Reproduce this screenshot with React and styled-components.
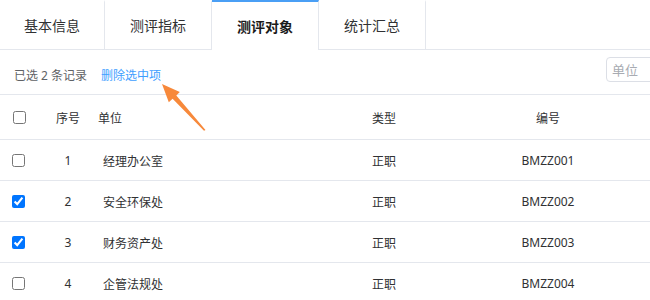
import React from "react";
import styled, { createGlobalStyle } from "styled-components";

const Global = createGlobalStyle`
  html, body { margin: 0; padding: 0; background: #fff; }
  body {
    font-family: "Noto Sans", "Noto Sans CJK SC", sans-serif;
    color: #303133;
    overflow: hidden;
  }
`;

const Page = styled.div`
  position: relative;
  width: 650px;
  height: 300px;
  overflow: hidden;
`;

const TabBar = styled.div`
  display: flex;
  border-bottom: 1px solid #e4e7ed;
  height: 49px;
`;

const Tab = styled.div`
  box-sizing: border-box;
  width: ${(p) => p.$w}px;
  height: ${(p) => (p.$active ? 50 : 49)}px;
  border-right: 1px solid #e4e7ed;
  border-top: 2px solid ${(p) => (p.$active ? "#4a9ff5" : "transparent")};
  background: #fff;
  display: flex;
  align-items: center;
  justify-content: center;
  font-size: 14px;
  font-weight: ${(p) => (p.$active ? 700 : 400)};
  color: ${(p) => (p.$active ? "#1a1a1a" : "#303133")};
  padding-bottom: ${(p) => (p.$active ? 0 : 1)}px;
  z-index: 1;
  flex: none;
`;

const Toolbar = styled.div`
  display: flex;
  align-items: center;
  height: 44px;
  padding: 0 0 0 14px;
  border-bottom: 1px solid #e4e7ed;
  font-size: 12px;
`;

const Info = styled.div`
  display: flex;
  gap: 14px;
  padding-top: 6px;
  color: #606266;
`;

const LinkText = styled.span`
  color: #409eff;
  cursor: pointer;
`;

const Search = styled.input`
  margin-left: auto;
  margin-bottom: 5px;
  width: 80px;
  height: 25px;
  box-sizing: border-box;
  border: 1px solid #dcdfe6;
  border-radius: 4px;
  padding: 0 0 0 5px;
  font-size: 13px;
  font-family: inherit;
  margin-right: -36px;
  outline: none;
  &::placeholder { color: #a8abb2; }
`;

const Row = styled.div`
  display: grid;
  grid-template-columns: 38px 60px 242px 88px 240px;
  width: 668px;
  height: ${(p) => (p.$head ? 44 : 40)}px;
  border-bottom: 1px solid #e4e7ed;
  align-items: center;
  font-size: 12px;
  color: #303133;
`;

const CheckCell = styled.div`
  padding-left: ${(p) => (p.$head ? 13 : 12)}px;
  display: flex;
  align-items: center;
  padding-top: ${(p) => (p.$head ? 0 : 0)}px;
`;

const Check = styled.input`
  margin: 0;
  width: 13px;
  height: 13px;
  accent-color: #0075ff;
`;

const Cell = styled.div`
  text-align: ${(p) => p.$align || "left"};
  padding-left: ${(p) => p.$pl || 0}px;
  padding-top: ${(p) => (p.$head ? 2 : 1)}px;
  white-space: nowrap;
`;

const Arrow = styled.svg`
  position: absolute;
  left: 0;
  top: 0;
  pointer-events: none;
`;

const rows = [
  { no: 1, name: "经理办公室", type: "正职", code: "BMZZ001", checked: false },
  { no: 2, name: "安全环保处", type: "正职", code: "BMZZ002", checked: true },
  { no: 3, name: "财务资产处", type: "正职", code: "BMZZ003", checked: true },
  { no: 4, name: "企管法规处", type: "正职", code: "BMZZ004", checked: false },
];

const tabs = [
  { label: "基本信息", w: 105 },
  { label: "测评指标", w: 107 },
  { label: "测评对象", w: 107, active: true },
  { label: "统计汇总", w: 107 },
];

export default function App() {
  return (
    <Page>
      <Global />
      <TabBar>
        {tabs.map((t) => (
          <Tab key={t.label} $w={t.w} $active={t.active}>
            {t.label}
          </Tab>
        ))}
      </TabBar>
      <Toolbar>
        <Info>
          <span>已选 2 条记录</span>
          <LinkText>删除选中项</LinkText>
        </Info>
        <Search placeholder="单位" />
      </Toolbar>
      <Row $head>
        <CheckCell $head>
          <Check type="checkbox" readOnly />
        </CheckCell>
        <Cell $head $align="center">序号</Cell>
        <Cell $head>单位</Cell>
        <Cell $head $align="center">类型</Cell>
        <Cell $head $align="center">编号</Cell>
      </Row>
      {rows.map((r) => (
        <Row key={r.no}>
          <CheckCell>
            <Check type="checkbox" defaultChecked={r.checked} />
          </CheckCell>
          <Cell $align="center">{r.no}</Cell>
          <Cell $pl={5}>{r.name}</Cell>
          <Cell $align="center">{r.type}</Cell>
          <Cell $align="center">{r.code}</Cell>
        </Row>
      ))}
      <Arrow width="650" height="300" viewBox="0 0 650 300">
        <polygon
          points="162,84 179.8,92 176.3,95.4 205.5,130 204,130.8 172.6,98.8 168.8,102.2"
          fill="#f7893b"
        />
      </Arrow>
    </Page>
  );
}
